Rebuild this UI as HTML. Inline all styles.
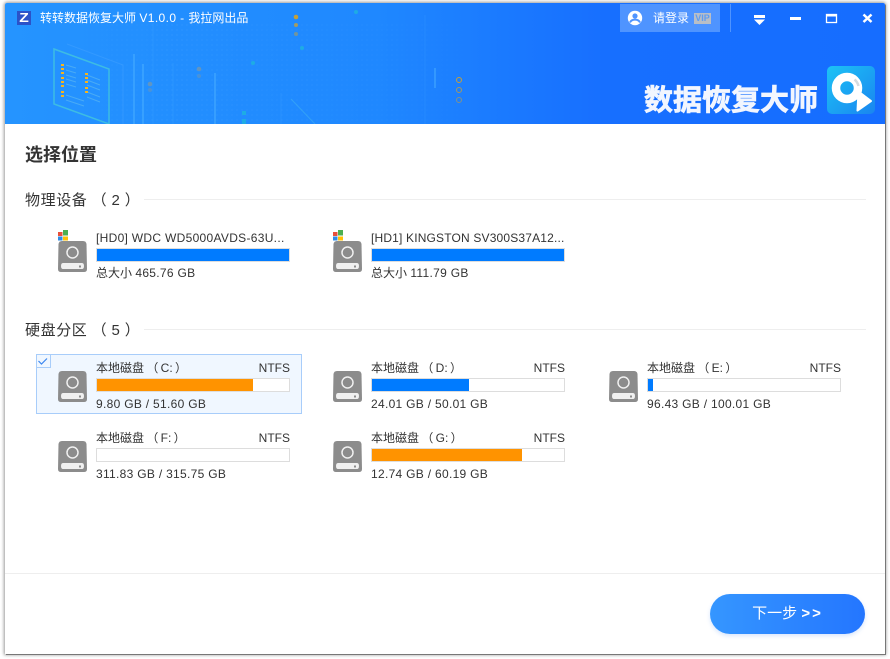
<!DOCTYPE html>
<html><head><meta charset="utf-8"><style>
html,body{margin:0;padding:0;background:#fff}
body{width:890px;height:659px;position:relative;overflow:hidden;font-family:"Liberation Sans","Noto Sans CJK SC",sans-serif;color:#333}
.a{position:absolute;white-space:nowrap}
#win{position:absolute;left:5px;top:3px;width:880px;height:651px;background:#fff;box-shadow:1px 1px 0 #777,0 0 3px 1px rgba(0,0,0,.4);border-radius:2px 2px 0 0}
#hd{position:absolute;left:5px;top:3px;width:880px;height:121px;background:linear-gradient(90deg,#2594ff 0%,#1f88ff 42%,#176fff 68%,#166dff 100%);overflow:hidden;border-radius:2px 2px 0 0}
.t{font-size:12px;line-height:16px;color:#333}
.s{letter-spacing:.3px}
.l{word-spacing:-1px}
.h{font-size:15px;line-height:20px;color:#333;letter-spacing:.6px;word-spacing:-.5px}
.bar{position:absolute;width:192px;height:12px;border:1px solid #ddd;background:#fff}
.bar i{display:block;height:12px}
.bl{background:#007bff}.or{background:#ff9300}
.ln{position:absolute;height:1px;background:#eee}
</style></head><body>
<div id="win"></div>
<div id="hd">
<svg width="880" height="121" style="position:absolute;left:0;top:0">
<defs>
<pattern id="dots" width="5" height="5" patternUnits="userSpaceOnUse"><circle cx="2" cy="2" r="1" fill="#9fd4ff"/></pattern>
<linearGradient id="fx" x1="0" y1="0" x2="1" y2="0"><stop offset="0" stop-color="#fff" stop-opacity="0"/><stop offset=".3" stop-color="#fff"/><stop offset=".8" stop-color="#fff" stop-opacity=".5"/><stop offset="1" stop-color="#fff" stop-opacity="0"/></linearGradient>
<mask id="m"><rect x="30" y="0" width="480" height="121" fill="url(#fx)"/></mask>
</defs>
<rect x="30" y="20" width="480" height="101" fill="url(#dots)" opacity=".06" mask="url(#m)"/>
<g fill="none">
<path d="M49 46L104 66V121L49 101Z" stroke="#4fd8d0" stroke-width="1.5" opacity=".6"/>
<path d="M62 41L118 62V121" stroke="#6ab8ff" stroke-width="1" opacity=".22"/>
</g>
<g stroke="#7fd0e8" stroke-width="1" opacity=".4">
<path d="M61 62L71 65M61 67L71 70M61 72L71 75M61 76L71 79M61 81L71 84M61 92L79 98M61 97L79 103M82 72L95 77M82 77L95 82M82 82L95 87M82 89L95 94M82 94L95 99"/>
</g>
<g fill="#f5b41e"><rect x="56" y="61" width="3" height="2"/><rect x="56" y="65" width="3" height="2"/><rect x="56" y="69" width="3" height="2"/><rect x="56" y="74" width="3" height="2"/><rect x="56" y="78" width="3" height="2"/><rect x="56" y="82" width="3" height="2"/><rect x="56" y="88" width="3" height="2"/><rect x="56" y="92" width="3" height="2"/><rect x="80" y="70" width="3" height="2"/><rect x="80" y="74" width="3" height="2"/><rect x="80" y="78" width="3" height="2"/><rect x="80" y="84" width="3" height="2"/><rect x="80" y="88" width="3" height="2"/></g>
<g stroke="#55b8ff" opacity=".4">
<path d="M129 51V121M138 61V121M210 70V121" stroke-width="2"/>
<path d="M148 20V121M168 60V121M276 90V121M420 12V121" stroke-width="1" opacity=".4"/>
<path d="M430 65V85" stroke-width="2"/>
</g>
<path d="M286 96L310 121" stroke="#55c8e8" stroke-width="1" opacity=".35"/>
<g fill="#c4a03a"><circle cx="291" cy="14" r="2.3"/><circle cx="291" cy="22" r="2" opacity=".8"/><circle cx="291" cy="31" r="2" opacity=".5"/></g>
<g fill="#8a9a9a" opacity=".6"><circle cx="194" cy="66" r="2.3"/><circle cx="194" cy="73" r="2" opacity=".6"/><circle cx="145" cy="81" r="2.3"/><circle cx="145" cy="87" r="2" opacity=".6"/></g>
<g fill="none" stroke="#c4a03a"><circle cx="454" cy="77" r="2.5"/><circle cx="454" cy="87" r="2.5" opacity=".8"/><circle cx="454" cy="97" r="2.5" opacity=".6"/></g>
<g fill="#1fb4de" opacity=".8"><circle cx="351" cy="9" r="2"/><circle cx="297" cy="45" r="2"/><circle cx="248" cy="60" r="2"/><rect x="237" y="108" width="4" height="4"/><rect x="237" y="116" width="4" height="5"/></g>
</svg>
</div>
<!-- title -->
<div class="a" style="left:17px;top:11px;width:14px;height:14px;background:#2b52c8;overflow:hidden"><div style="color:#fff;font:bold 13px/14px 'Liberation Sans',sans-serif;text-align:center;transform:scaleX(1.2)">Z</div></div>
<div class="a" style="left:40px;top:10px;font-size:12px;line-height:16px;color:#fff">转转数据恢复大师 <span style="letter-spacing:.4px">V1.0.0 - </span>我拉网出品</div>
<!-- login -->
<div class="a" style="left:620px;top:4px;width:100px;height:28px;background:#4f94ff"></div>
<svg class="a" style="left:627px;top:10px" width="16" height="16" viewBox="0 0 16 16"><circle cx="8" cy="8" r="7.200" fill="#fff"/><circle cx="8" cy="6" r="2.600" fill="#4f94ff"/><path d="M3 12.500C4 10 6 9.600 8 9.600S12 10 13 12.500" fill="none" stroke="#4f94ff" stroke-width="2"/></svg>
<div class="a" style="left:653px;top:10px;font-size:12px;line-height:16px;color:#fff">请登录</div>
<div class="a" style="left:694px;top:13px;width:17px;height:11px;background:#b9bec6;color:#5e9cf0;font:bold 9px/11px 'Liberation Sans',sans-serif;text-align:center">VIP</div>
<div class="a" style="left:730px;top:4px;width:1px;height:28px;background:#4f94ff"></div>
<!-- win controls -->
<svg class="a" style="left:750px;top:10px" width="130" height="18">
<path d="M4 5H15V8H4ZM4 9.500H15L9.500 15Z" fill="#fff"/>
<rect x="40" y="7" width="11" height="3" fill="#fff"/>
<rect x="76.500" y="4.500" width="10" height="8" fill="none" stroke="#fff" stroke-width="1.300"/><rect x="76" y="4" width="11" height="2.500" fill="#fff"/>
<path d="M113.500 4.500L121.500 12M121.500 4.500L113.500 12" stroke="#fff" stroke-width="2.500"/>
</svg>
<!-- brand -->
<div class="a" style="left:644px;top:79px;font-size:29px;line-height:38px;font-weight:bold;color:#f2f6ff;font-family:'Noto Sans CJK SC',sans-serif;-webkit-text-stroke:.7px #f2f6ff">数据恢复大师</div>
<svg class="a" style="left:827px;top:66px" width="48" height="48" viewBox="0 0 48 48">
<defs><linearGradient id="g" x1="0" y1="0" x2="1" y2="1"><stop offset="0" stop-color="#1cc3f5"/><stop offset="1" stop-color="#1a85f0"/></linearGradient></defs>
<rect width="48" height="48" rx="5" fill="url(#g)"/>
<circle cx="20" cy="22" r="11" fill="none" stroke="#fff" stroke-width="8.500"/>
<path d="M27.500 13.500A11.500 11.500 0 0 1 31.500 20" fill="none" stroke="#d4dbe0" stroke-width="2.500"/>
<path d="M31.500 25.500L44 35L30.500 44.500Z" fill="#fff" stroke="#fff" stroke-width="2" stroke-linejoin="round"/>
</svg>
<!-- body -->
<div class="a" style="left:25px;top:143px;font-size:18px;line-height:24px;font-weight:bold;color:#333">选择位置</div>
<div class="a h" style="left:25px;top:191px">物理设备 （ 2 ）</div>
<div class="ln" style="left:144px;top:199px;width:722px"></div>
<div class="a h" style="left:25px;top:321px">硬盘分区 （ 5 ）</div>
<div class="ln" style="left:144px;top:329px;width:722px"></div>

<svg width="0" height="0" style="position:absolute"><defs>
<g id="d"><path d="M4 0H25Q28 0 28.500 3L29 28Q29 31 26 31H3Q0 31 0 28L.5 3Q1 0 4 0Z" fill="#8c8c8c"/><circle cx="14.500" cy="11.500" r="5.500" fill="none" stroke="#f0f0f0" stroke-width="1.500"/><path d="M5 22H24Q26 22 26 25T24 28H5Q3 28 3 25T5 22Z" fill="#f0f0f0"/><rect x="21" y="24.500" width="2" height="2" fill="#8c8c8c"/></g>
<g id="w"><rect x="0" y="3" width="4.500" height="4" fill="#e8503a"/><rect x="5" y="1" width="5" height="5.500" fill="#4caf50"/><rect x="0" y="7.500" width="4.500" height="4" fill="#2f8be6"/><rect x="5" y="7.500" width="5" height="4" fill="#ffc107"/></g>
</defs></svg>

<!-- physical -->
<svg class="a" style="left:58px;top:229px" width="32" height="44"><use href="#w"/><use href="#d" y="12"/></svg>
<div class="a t" style="left:96px;top:230px;letter-spacing:.3px">[HD0] WDC WD5000AVDS-63U...</div>
<div class="bar" style="left:96px;top:248px"><i class="bl" style="width:192px"></i></div>
<div class="a t" style="left:96px;top:265px">总大小 <span class="s">465.76 GB</span></div>

<svg class="a" style="left:333px;top:229px" width="32" height="44"><use href="#w"/><use href="#d" y="12"/></svg>
<div class="a t" style="left:371px;top:230px;letter-spacing:.17px">[HD1] KINGSTON SV300S37A12...</div>
<div class="bar" style="left:371px;top:248px"><i class="bl" style="width:192px"></i></div>
<div class="a t" style="left:371px;top:265px">总大小 <span class="s">111.79 GB</span></div>

<!-- selected -->
<div class="a" style="left:36px;top:354px;width:264px;height:58px;background:#f0f7ff;border:1px solid #a8cdfa"></div>
<div class="a" style="left:36px;top:354px;width:14px;height:13px;border:1px solid #a8cdfa;border-width:0 1px 1px 0"></div>
<svg class="a" style="left:37px;top:355px" width="14" height="13"><path d="M1.500 6L4.500 9L10 3.500" fill="none" stroke="#3b86f0" stroke-width="1.200"/></svg>

<!-- partitions -->
<svg class="a" style="left:58px;top:371px" width="30" height="31"><use href="#d"/></svg>
<div class="a t l" style="left:96px;top:360px">本地磁盘 （ C: ）</div>
<div class="a t" style="right:600px;top:360px">NTFS</div>
<div class="bar" style="left:96px;top:378px"><i class="or" style="width:156px"></i></div>
<div class="a t s" style="left:96px;top:396px">9.80 GB / 51.60 GB</div>

<svg class="a" style="left:333px;top:371px" width="30" height="31"><use href="#d"/></svg>
<div class="a t l" style="left:371px;top:360px">本地磁盘 （ D: ）</div>
<div class="a t" style="right:325px;top:360px">NTFS</div>
<div class="bar" style="left:371px;top:378px"><i class="bl" style="width:97px"></i></div>
<div class="a t s" style="left:371px;top:396px">24.01 GB / 50.01 GB</div>

<svg class="a" style="left:609px;top:371px" width="30" height="31"><use href="#d"/></svg>
<div class="a t l" style="left:647px;top:360px">本地磁盘 （ E: ）</div>
<div class="a t" style="right:49px;top:360px">NTFS</div>
<div class="bar" style="left:647px;top:378px"><i class="bl" style="width:5px"></i></div>
<div class="a t s" style="left:647px;top:396px">96.43 GB / 100.01 GB</div>

<svg class="a" style="left:58px;top:441px" width="30" height="31"><use href="#d"/></svg>
<div class="a t l" style="left:96px;top:430px">本地磁盘 （ F: ）</div>
<div class="a t" style="right:600px;top:430px">NTFS</div>
<div class="bar" style="left:96px;top:448px"></div>
<div class="a t s" style="left:96px;top:466px">311.83 GB / 315.75 GB</div>

<svg class="a" style="left:333px;top:441px" width="30" height="31"><use href="#d"/></svg>
<div class="a t l" style="left:371px;top:430px">本地磁盘 （ G: ）</div>
<div class="a t" style="right:325px;top:430px">NTFS</div>
<div class="bar" style="left:371px;top:448px"><i class="or" style="width:150px"></i></div>
<div class="a t s" style="left:371px;top:466px">12.74 GB / 60.19 GB</div>

<!-- footer -->
<div class="ln" style="left:5px;top:573px;width:880px"></div>
<div class="a" style="left:710px;top:594px;width:155px;height:40px;border-radius:20px;background:linear-gradient(90deg,#3596ff,#2476ff);box-shadow:0 2px 4px rgba(60,130,240,.2);color:#fff;font-size:15px;line-height:39px;text-align:center">下一步 <b style="letter-spacing:2px">&gt;&gt;</b></div>
</body></html>
